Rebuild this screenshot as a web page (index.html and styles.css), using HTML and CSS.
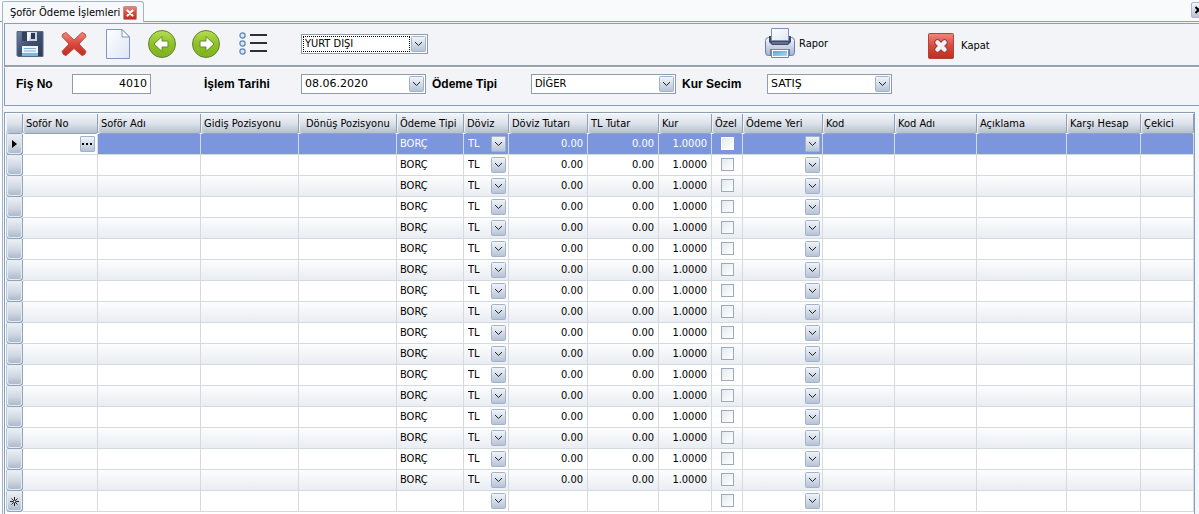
FILE: index.html
```html
<!DOCTYPE html>
<html lang="tr">
<head>
<meta charset="utf-8">
<title>Şoför Ödeme İşlemleri</title>
<link rel="stylesheet" href="styles.css">
</head>
<body>
<svg class="defs" aria-hidden="true">
  <defs>
    <linearGradient id="red" x1="0" y1="0" x2="0" y2="1"><stop offset="0" stop-color="#ec8a80"/><stop offset=".5" stop-color="#d8493c"/><stop offset="1" stop-color="#bf2c20"/></linearGradient>
    <linearGradient id="green" x1="0" y1="0" x2="0" y2="1"><stop offset="0" stop-color="#b5dd51"/><stop offset=".5" stop-color="#8fc127"/><stop offset="1" stop-color="#7fb31c"/></linearGradient>
    <linearGradient id="navy" x1="0" y1="0" x2="1" y2="1"><stop offset="0" stop-color="#6f82a2"/><stop offset=".5" stop-color="#3f4f6e"/><stop offset="1" stop-color="#2c3b59"/></linearGradient>
    <linearGradient id="paper" x1="0" y1="0" x2="1" y2="1"><stop offset="0" stop-color="#ffffff"/><stop offset="1" stop-color="#dde6f4"/></linearGradient>
    <linearGradient id="steel" x1="0" y1="0" x2="0" y2="1"><stop offset="0" stop-color="#f4f7fc"/><stop offset="1" stop-color="#a3b2d2"/></linearGradient>
    <linearGradient id="sky" x1="0" y1="0" x2="1" y2="1"><stop offset="0" stop-color="#5b9fd8"/><stop offset="1" stop-color="#a5dcf8"/></linearGradient>
  </defs>
</svg>
<nav class="tabs">
  <div class="tab">
    <span>Şoför Ödeme İşlemleri</span>
    <button class="tab-close" aria-label="Sekmeyi kapat">
      <svg width="14" height="14" viewBox="0 0 14 14"><rect x=".5" y=".5" width="13" height="13" rx="1" fill="url(#red)" stroke="#c58a88"/><path d="M4.500 4.500l5 5m0-5l-5 5" stroke="#fff" stroke-width="2.200" stroke-linecap="round"/></svg>
    </button>
  </div>
  <button class="strip-close" aria-label="Kapat">
    <svg width="16" height="16" viewBox="0 0 16 16"><path d="M4.500 5l6 6m0-6l-6 6" stroke="#000" stroke-width="2"/></svg>
  </button>
</nav>
<main class="page">
  <div class="panel toolbar">
    <button class="tool" aria-label="Kaydet">
      <svg width="28" height="28" viewBox="0 0 28 28"><path d="M1 1.500h26v25H2l-1-1z" fill="url(#navy)" stroke="#5b6983"/><path d="M6 2h15v9H6z" fill="#c9d3e4"/><path d="M6 2h5v9H6z" fill="#33415c"/><path d="M15 3h4v6h-4z" fill="#2a3853"/><path d="M11 2h4l-2 9h-2z" fill="#f1f5fb"/><path d="M6 16h16v10H6z" fill="#eef5fb"/><path d="M8 18.500h12M8 21h12" stroke="#8eaed0"/><path d="M6 23h16v3H6z" fill="#72b9ea"/></svg>
    </button>
    <button class="tool" aria-label="Sil">
      <svg width="26" height="28" viewBox="0 0 26 28"><path d="M5 2.500l8 7.500 8-7.500q4 1 4 4L18 14l7 7.500q-1 4-4 4L13 18.500 5 25.500q-3 0-4-4L8 14 1 6.500q0-3 4-4z" fill="url(#red)" stroke="#c4473c"/></svg>
    </button>
    <button class="tool" aria-label="Yeni">
      <svg width="26" height="32" viewBox="0 0 26 32"><path d="M1.500 1.500h15.500l7.500 7.500v21.500h-23z" fill="url(#paper)" stroke="#8096bb"/><path d="M17 1.500v7.500h7.500z" fill="#fff" stroke="#7e93b5"/></svg>
    </button>
    <button class="tool" aria-label="Önceki">
      <svg width="30" height="30" viewBox="0 0 30 30"><circle cx="15" cy="15" r="13.500" fill="url(#green)" stroke="#65803a"/><path d="M7 15l8-7.500v4.500h6v6h-6v4.500z" fill="#fff" stroke="#658c22"/></svg>
    </button>
    <button class="tool" aria-label="Sonraki">
      <svg width="30" height="30" viewBox="0 0 30 30"><circle cx="15" cy="15" r="13.500" fill="url(#green)" stroke="#65803a"/><path d="M23 15l-8-7.500v4.500H9v6h6v4.500z" fill="#fff" stroke="#658c22"/></svg>
    </button>
    <button class="tool wide" aria-label="Liste">
      <svg width="28" height="24" viewBox="0 0 28 24"><g fill="#d5ecff" stroke="#5d81b7" stroke-width="1.200"><circle cx="3.500" cy="3.500" r="2.600"/><circle cx="3.500" cy="11.500" r="2.600"/><circle cx="3.500" cy="19.500" r="2.600"/></g><path d="M11 3h17M11 11h17M11 19h17" stroke="#2d3137" stroke-width="2"/></svg>
    </button>
    <span class="focus-combo"><select class="combo" aria-label="Bölge"><option>YURT DIŞI</option></select></span>
    <button class="action print">
      <svg width="32" height="32" viewBox="0 0 32 32"><rect x="1.500" y="9.500" width="29" height="18" rx="3" fill="url(#steel)" stroke="#687fae"/><path d="M5 8h22v6l-3 3H8l-3-3z" fill="#424b66"/><path d="M8 15h16" stroke="#8794b2"/><path d="M7.500 .500h17v12h-17z" fill="url(#paper)" stroke="#8092b7"/><path d="M6 21h20v6H6z" fill="#6f7fa6"/><path d="M7.500 21.500h17v8h-17z" fill="#fff" stroke="#7386ad"/><path d="M9 23h14v5H9z" fill="url(#sky)"/></svg>
      <span>Rapor</span>
    </button>
    <button class="action close">
      <svg width="28" height="28" viewBox="0 0 28 28"><rect x="1.500" y="1.500" width="25" height="25" rx="1" fill="url(#red)" stroke="#b34239"/><path d="M10.500 10.500l7 7m0-7l-7 7" stroke="#983e39" stroke-width="6.500" stroke-linecap="round"/><path d="M10.500 10.500l7 7m0-7l-7 7" stroke="#f3f0f8" stroke-width="4.500" stroke-linecap="round"/></svg>
      <span>Kapat</span>
    </button>
  </div>
  <form class="panel fields">
    <label for="no">Fiş No</label>
    <input id="no" class="number" type="text" value="4010">
    <label for="date">İşlem Tarihi</label>
    <input id="date" class="combo large" type="text" value="08.06.2020">
    <label for="type">Ödeme Tipi</label>
    <select id="type" class="combo"><option>DİĞER</option></select>
    <label for="rate">Kur Secim</label>
    <select id="rate" class="combo large"><option>SATIŞ</option></select>
  </form>
  <div class="grid">
    <table>
      <colgroup><col class="c-mark"><col class="c-no"><col class="c-name"><col class="c-pos"><col class="c-pos"><col class="c-type"><col class="c-cur"><col class="c-sum"><col class="c-tl"><col class="c-rate"><col class="c-own"><col class="c-place"><col class="c-code"><col class="c-cname"><col class="c-note"><col class="c-acc"><col></colgroup>
      <thead><tr><th></th><th>Soför No</th><th>Soför Adı</th><th>Gidiş Pozisyonu</th><th class="inset">Dönüş Pozisyonu</th><th>Ödeme Tipi</th><th>Döviz</th><th>Döviz Tutarı</th><th>TL Tutar</th><th>Kur</th><th>Özel</th><th>Ödeme Yeri</th><th>Kod</th><th>Kod Adı</th><th>Açıklama</th><th>Karşı Hesap</th><th>Çekici</th></tr></thead>
      <tbody id="rows"></tbody>
    </table>
  </div>
</main>
<script src="rows.js"></script>
</body>
</html>
```
FILE: styles.css
```css
* { box-sizing: border-box; }

:root {
  --line: #8a9fb5;
  --arrow: url("data:image/svg+xml,%3Csvg xmlns='http://www.w3.org/2000/svg' width='15' height='16'%3E%3ClinearGradient id='g' x1='0' y1='0' x2='0' y2='1'%3E%3Cstop offset='0' stop-color='%23f3f6fa'/%3E%3Cstop offset='1' stop-color='%23b4c2d6'/%3E%3C/linearGradient%3E%3Crect x='.5' y='.5' width='14' height='15' rx='1' fill='url(%23g)' stroke='%23a3b2c6'/%3E%3Cpath d='M4 6l3.500 3.500L11 6' fill='none' stroke='%23222'/%3E%3C/svg%3E");
}

body {
  margin: 0;
  min-height: 100vh;
  overflow: hidden;
  background: #f9fafc;
  color: #000;
  font: 11px/14px "DejaVu Sans Condensed", "DejaVu Sans", sans-serif;
}

button, input, select { font: inherit; color: inherit; margin: 0; }
button { padding: 0; border: 0; background: none; display: flex; align-items: center; justify-content: center; }
svg { display: block; fill: none; flex: none; }
.defs { position: absolute; width: 0; height: 0; }

.tabs {
  display: flex;
  justify-content: space-between;
  height: 22px;
  padding: 1px 0 0 2px;
  border-bottom: 1px solid var(--line);
}
.tab {
  display: flex;
  align-items: center;
  gap: 3px;
  height: 21px;
  padding: 2px 6px 0 7px;
  border: 1px solid #a3b4c6;
  border-bottom: 0;
  border-radius: 2px 3px 0 0;
  background: #f6f8fb;
}
.strip-close {
  width: 16px;
  height: 16px;
  margin: 1px -8px 0 0;
  border: 1px solid #a9b8ca;
  border-radius: 2px;
  background: linear-gradient(#f3f6fa, #b8c5d6);
}

.page {
  min-height: calc(100vh - 22px);
  margin-left: 2px;
  padding: 1px 0 0 1px;
  border-left: 1px solid #a3b4c6;
  background: #f3f6fa;
}
.panel {
  display: flex;
  align-items: center;
  border: 1px solid var(--line);
  border-right: 0;
  background: #f2f4f7;
}
.toolbar { height: 44px; padding: 0 0 2px 3px; border-bottom: 2px solid #98a2ae; }
.tool { width: 44px; height: 32px; }
.tool.wide { width: 50px; }

.combo, .number {
  height: 20px;
  border: 1px solid #8f9dab;
  border-radius: 0;
  background-color: #fff;
  outline: 0;
}
.combo {
  appearance: none;
  width: 125px;
  padding: 0 18px 0 3px;
  background-image: var(--arrow);
  background-repeat: no-repeat;
  background-position: right 1px center;
}
.large, .number { font-family: "DejaVu Sans", sans-serif; }
.number { width: 79px; padding: 0 3px; text-align: right; }
.focus-combo { position: relative; margin-left: 23px; }
.focus-combo::after {
  content: "";
  position: absolute;
  inset: 2px 18px 2px 2px;
  border: 1px dotted #000;
  pointer-events: none;
}
.focus-combo .combo { display: block; width: 127px; }
.action { gap: 3px; }
.print { margin-left: 336px; }
.close { margin: 4px 0 0 99px; gap: 6px; }

.fields {
  display: grid;
  grid-template-columns: 56px 132px 97px 131px 99px 151px 85px auto;
  height: 39px;
  padding: 0 0 6px 11px;
  border-top-color: #fff;
}
.fields label { font: bold 12px/16px "Liberation Sans", Arial, sans-serif; }
#type { width: 145px; }

.grid { margin: 6px 4px 0 0; padding: 1px 0 2px 1px; border: 1px solid var(--line); border-bottom: 0; background: #fff; }
table { width: 100%; table-layout: fixed; border-collapse: separate; border-spacing: 0; }
.c-mark { width: 17px; } .c-no { width: 75px; } .c-name { width: 103px; }
.c-pos { width: 98px; } .c-type { width: 67px; } .c-cur { width: 45px; }
.c-sum { width: 79px; } .c-tl { width: 71px; } .c-rate { width: 53px; }
.c-own { width: 31px; } .c-place { width: 80px; } .c-code { width: 72px; }
.c-cname { width: 82px; } .c-note { width: 90px; } .c-acc { width: 74px; }
th, td { height: 21px; padding: 0 3px; white-space: nowrap; overflow: hidden; }
th {
  height: 20px;
  text-align: left;
  font-weight: normal;
  border-right: 1px solid #8fa0b6;
  border-bottom: 1px solid #93a3b8;
  border-radius: 0 0 3px 3px;
  background: linear-gradient(#f1f3f7, #dde2ea 50%, #b3bfcf);
  box-shadow: inset 1px 0 #eef1f5;
}
th.inset { padding-left: 7px; }
td { border-right: 1px solid #d3dbe1; border-bottom: 1px solid #d3dbe1; }
tbody tr:nth-child(odd) { background: linear-gradient(#fdfdfe, #e8ecf1); }
tbody tr:nth-child(even), tbody tr:last-child { background: #fff; }
tbody td.mark {
  padding: 0;
  border: 1px solid #8fa3bb;
  border-top: 0;
  border-left-color: #bcc8d6;
  border-radius: 0 0 3px 3px;
  background: linear-gradient(#eef1f6, #d0d8e3 55%, #a9b7c9);
  box-shadow: inset 0 0 0 1px #e6ebf1;
}
.mark svg { margin: 0 auto; }
td.num { padding-right: 4px; text-align: right; }
tbody tr.current { background: #7b96dd; color: #fff; }
tbody tr.current td.first { background: #fff; }
td.first { padding: 0 2px; }
.more { width: 15px; height: 16px; margin-left: auto; border: 1px solid #a3b2c6; border-radius: 1px; background: linear-gradient(#f3f6fa, #b4c2d6); }
td.pick { padding: 0 2px 0 0; }
td.pick select {
  display: block;
  appearance: none;
  width: 100%;
  height: 18px;
  padding: 0 18px 0 4px;
  border: 0;
  outline: 0;
  background: transparent var(--arrow) no-repeat right center;
}
td.check { padding: 0 0 2px; }
td.check input {
  appearance: none;
  display: block;
  width: 13px;
  height: 13px;
  margin: 0 auto;
  border: 1px solid #9cabb9;
  background: linear-gradient(135deg, #e5e9ee, #fff);
}
.current td.check input { border-color: #fff; }
```
FILE: rows.js
```js
const entryCount = 17;
const pointer = '<svg width="5" height="8" viewBox="0 0 5 8"><path d="M0 0l5 4-5 4z" fill="#000"/></svg>';
const star = '<svg width="9" height="9" viewBox="0 0 9 9"><path d="M4.500 0v9M0 4.500h9M1.500 1.500l6 6m0-6l-6 6" stroke="#222"/><circle cx="4.500" cy="4.500" r="1" fill="#fff"/></svg>';
const more = '<button class="more" aria-label="Şoför seç"><svg width="11" height="2" viewBox="0 0 11 2"><path d="M0 0h2v2H0zM4 0h2v2H4zM8 0h2v2H8z" fill="#000"/></svg></button>';

function row(i) {
  const filled = i < entryCount;
  const mark = i === 0 ? pointer : filled ? '' : star;
  return `<tr class="${i === 0 ? 'current' : ''}">
    <td class="mark">${mark}</td>
    <td class="first">${i === 0 ? more : ''}</td>
    <td></td><td></td><td></td>
    <td>${filled ? 'BORÇ' : ''}</td>
    <td class="pick"><select aria-label="Döviz"><option>${filled ? 'TL' : ''}</option></select></td>
    <td class="num">${filled ? '0.00' : ''}</td>
    <td class="num">${filled ? '0.00' : ''}</td>
    <td class="num">${filled ? '1.0000' : ''}</td>
    <td class="check"><input type="checkbox" aria-label="Özel"></td>
    <td class="pick"><select aria-label="Ödeme Yeri"><option></option></select></td>
    <td></td><td></td><td></td><td></td><td></td>
  </tr>`;
}

document.getElementById('rows').innerHTML =
  Array.from({ length: entryCount + 1 }, (_, i) => row(i)).join('');
```
